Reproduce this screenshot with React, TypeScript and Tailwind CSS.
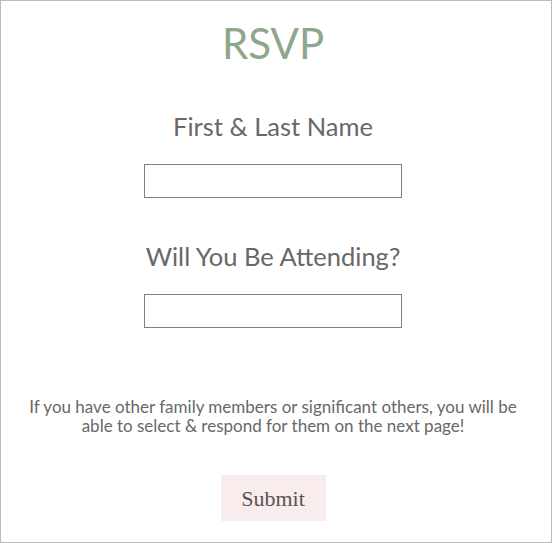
import { useState } from "react";

const App = () => {
  const [name, setName] = useState("");
  const [attending, setAttending] = useState("");

  return (
    <div className="w-[552px] h-[543px] bg-white border border-[#bbbbbb] pr-[6px] flex flex-col items-center font-['Lato',sans-serif] text-[#686868]">
      <h1 className="mt-[18px] text-[42px] leading-[48px] text-[#8da68c]">RSVP</h1>

      <label className="mt-[44px] text-[25.5px] leading-[30px]">First &amp; Last Name</label>
      <input
        value={name}
        onChange={(e) => setName(e.target.value)}
        className="mt-[23px] w-[258px] h-[34px] border border-[#808080] outline-none px-2"
      />

      <label className="mt-[43px] text-[25.5px] leading-[30px]">Will You Be Attending?</label>
      <input
        value={attending}
        onChange={(e) => setAttending(e.target.value)}
        className="mt-[23px] w-[258px] h-[34px] border border-[#808080] outline-none px-2"
      />

      <p className="mt-[69px] px-[24px] text-center text-[17px] leading-[19px]">
        If you have other family members or significant others, you will be able to select &amp; respond for them on the next page!
      </p>

      <button className="mt-[40px] w-[105px] h-[46px] bg-[#f9ecec] font-['Liberation_Serif',serif] text-[22px] text-[#555555]">
        Submit
      </button>
    </div>
  );
};

export default App;
